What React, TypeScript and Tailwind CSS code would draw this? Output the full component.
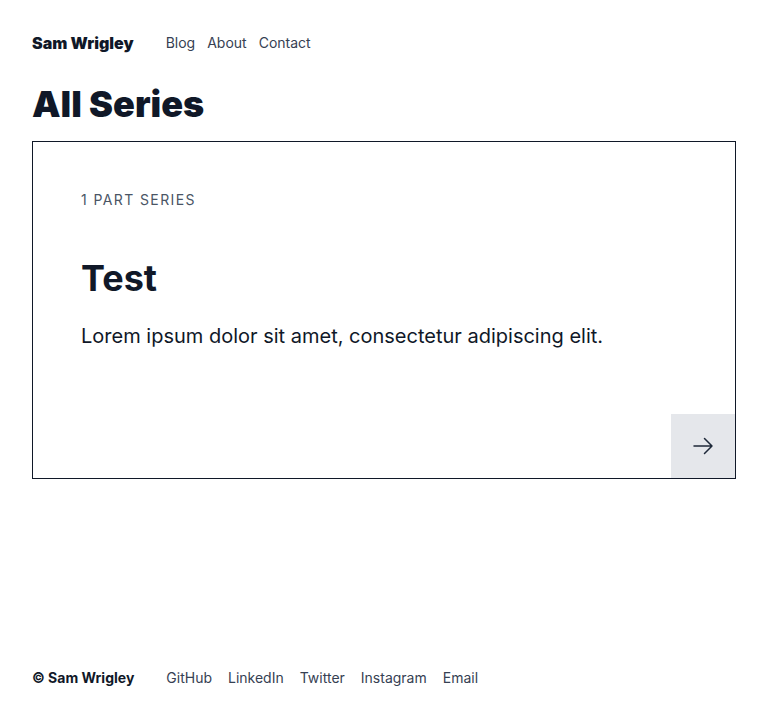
export default function App() {
  const links = ["GitHub", "LinkedIn", "Twitter", "Instagram", "Email"];
  return (
    <div className="min-h-screen flex flex-col bg-white text-gray-900 px-8 font-['Inter',sans-serif]">
      {/* Nav */}
      <header className="flex items-center pt-8 h-[54px]">
        <a href="#" className="text-base font-black text-gray-900 mr-8">Sam Wrigley</a>
        <nav className="flex items-center gap-3 text-sm text-gray-700">
          <a href="#">Blog</a>
          <a href="#">About</a>
          <a href="#">Contact</a>
        </nav>
      </header>

      <main className="flex-1">
        <h1 className="mt-[30px] mb-[17px] text-4xl font-black text-gray-900">All Series</h1>

        <div className="border border-gray-900 flex flex-col">
          <div className="px-12 pt-12 pb-16">
            <div className="text-sm uppercase tracking-widest text-gray-600">1 Part Series</div>
            <h2 className="mt-12 text-4xl font-bold text-gray-900">Test</h2>
            <p className="mt-6 text-xl text-gray-900">Lorem ipsum dolor sit amet, consectetur adipiscing elit.</p>
          </div>
          <div className="flex justify-end">
            <a href="#" className="w-16 h-16 bg-gray-200 flex items-center justify-center text-gray-800">
              <svg width="24" height="24" viewBox="0 0 24 24" fill="none" stroke="currentColor" strokeWidth="1.5" strokeLinecap="round" strokeLinejoin="round">
                <path d="M3 12h18M13.5 4.5 21 12l-7.5 7.5" />
              </svg>
            </a>
          </div>
        </div>
      </main>

      {/* Footer */}
      <footer className="flex items-center py-8 text-sm">
        <span className="font-bold text-gray-900 mr-8">© Sam Wrigley</span>
        <div className="flex items-center gap-4 text-gray-700">
          {links.map((l) => (
            <a key={l} href="#">{l}</a>
          ))}
        </div>
      </footer>
    </div>
  );
}
